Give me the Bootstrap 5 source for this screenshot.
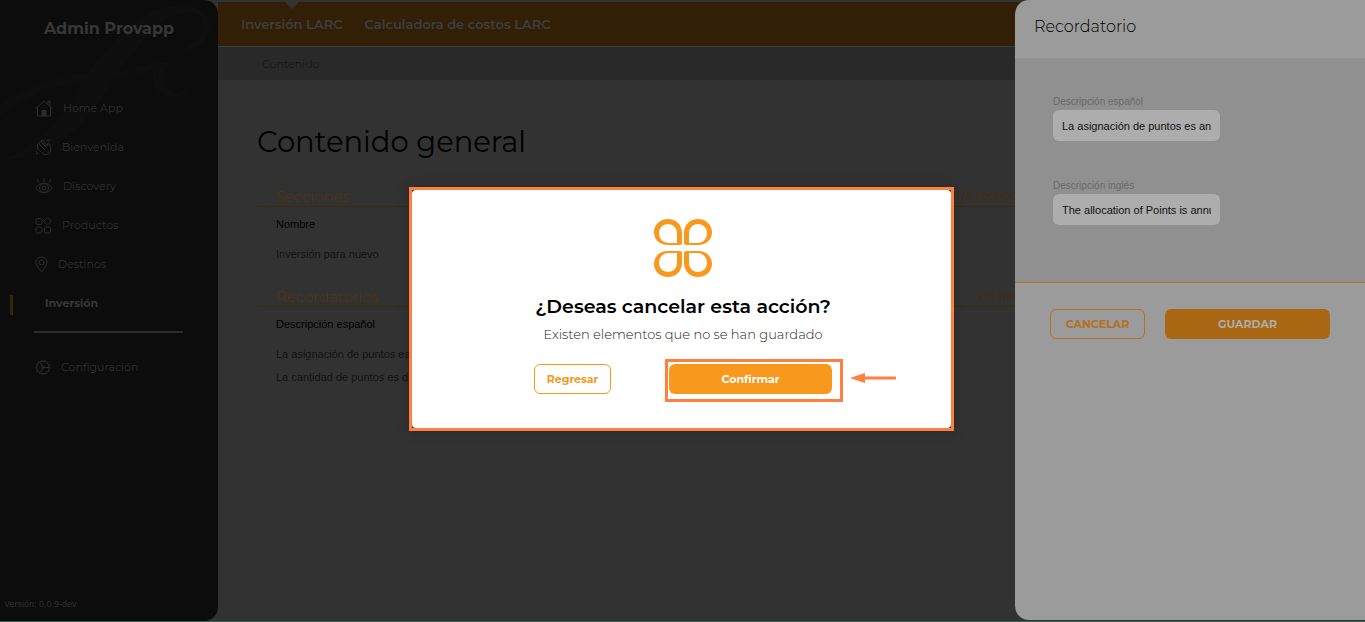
<!DOCTYPE html>
<html lang="es">
<head>
<meta charset="utf-8">
<meta name="viewport" content="width=device-width, initial-scale=1">
<title>Admin Provapp</title>
<link href="https://cdn.jsdelivr.net/npm/bootstrap@5.3.0/dist/css/bootstrap.min.css" rel="stylesheet">
<style>
  :root { --brand: Montserrat, Inter, sans-serif; --plain: "Liberation Sans", Arial, sans-serif; }
  body { font-family: var(--brand); font-size: 11px; line-height: 16px; background: #323232; color: #000; border-bottom: 1px solid #35605f; overflow: hidden; }
  a { text-decoration: none; color: inherit; }
  h1, h2, p { margin: 0; }

  /* Side menu */
  .side { width: 218px; background: #0c0c0c; border-radius: 0 14px 14px 0; color: #303030; overflow: hidden; }
  .side .swash { position: absolute; left: 0; top: 0; }
  .side-title { font-size: 16px; line-height: 24px; font-weight: 700; color: #373737; padding: 17px 0 47px; }
  .side-list a { height: 39px; padding-left: 35px; gap: 10px; }
  .side-list svg { fill: none; stroke: #2d2d2d; stroke-width: 1; flex: none; }
  .side-list a.current { padding-left: 45px; color: #373737; font-weight: 700; }
  .side-list a.current::before { content: ""; position: absolute; left: 10px; top: 12px; width: 3px; height: 20px; background: #3a2304; }
  .side-rule { margin: 9px 35px 14px 34px; border-top: 2px solid #2b2b2b; }
  .version { font: 9px/12px var(--plain); padding: 0 4px 11px; }

  /* Top tabs and breadcrumb */
  .tabs { margin-top: 2px; height: 45px; background: #321f07; border-bottom: 1px solid #3c3c3c; color: #3e3e3e; font-size: 13px; font-weight: 600; padding-left: 23px; gap: 22px; }
  .tabs a.current::before { content: ""; position: absolute; top: -14px; left: 50%; margin-left: -7px; border: 7px solid transparent; border-top-color: #323232; border-bottom: 0; }
  .crumbs { height: 33px; background: #292929; color: #161616; padding-left: 44px; }
  .page { padding: 42px 39px 0; }
  .page h1 { font-size: 29px; line-height: 40px; font-weight: 400; margin-bottom: 24px; }

  .group-head { color: #54360d; border-bottom: 1px solid #3f2b0a; padding: 0 296px 0 19px; height: 21px; }
  .group-head h2 { font-size: 15px; line-height: 22px; font-weight: 300; }
  .group-head span { font: 12px/20px "Open Sans", sans-serif; color: #452c0b; }
  .group-table { font: 11px/16px var(--plain); margin: 0 0 21px 19px; }
  .group-table th { font-weight: 400; color: #000; padding: 9px 0 10px; }
  .group-table td { color: #121212; padding: 4px 0 3px; }

  /* Drawer */
  .drawer { width: 350px; bottom: 1px; background: #9b9b9b; border-radius: 14px 0 0 14px; }
  .drawer-title { font-size: 16px; line-height: 20px; font-weight: 300; color: #000; padding: 17px 19px 21px; }
  .drawer-fields { background: #909090; border-bottom: 1px solid #a8741c; padding: 37px 38px 57px; font-family: var(--plain); }
  .drawer-fields label { font-size: 10px; line-height: 14px; margin-bottom: 1px; color: #6a6a6a; }
  .drawer-fields .form-control { width: 167px; height: 31px; padding: 0 9px; border: 0; border-radius: 6px; background: #adadad; color: #111; font-size: 11px; }
  .field + .field { margin-top: 38px; }
  .actions { padding: 26px 35px; gap: 20px; }
  .act { height: 30px; border-radius: 6px; padding: 0; font-size: 11px; line-height: 16px; font-weight: 700; }
  .act-dim { width: 95px; border: 1px solid #b3701d; color: #b3701d; }
  .act-dim-full { background: #a96613; color: #adadad; }

  /* Confirmation dialog */
  .veil { inset: 0 2px 3px 0; pointer-events: none; }
  .dialog { width: 545px; background: #333; border: 3px solid #ff7f3f; box-shadow: 0 0 12px rgba(0,0,0,.2); pointer-events: auto; }
  .dialog-body { background: #fff; border-radius: 4px; padding: 28px 119px 34px 122px; }
  .dialog h2 { font-size: 19px; line-height: 24px; font-weight: 600; margin-top: 17px; white-space: nowrap; }
  .dialog p { font-size: 13px; line-height: 20px; font-weight: 300; color: #222; margin: 5px 0 20px; white-space: nowrap; }
  .act-line { width: 77px; border: 1px solid #f8981d; color: #f8981d; }
  .act-full { width: 163px; background: #f8981d; color: #fff; }
  .mark-frame { inset: -5px -11px -8px -4px; border: 3px solid #ff7f3f; pointer-events: none; }
  .mark-arrow { left: 100%; top: 8px; margin-left: 18px; }
</style>
</head>
<body class="vh-100 d-flex position-relative">

<nav class="side position-relative d-flex flex-column flex-shrink-0" aria-label="Menú principal">
  <svg class="swash" width="218" height="170" fill="#0e0e0e" aria-hidden="true">
    <path d="M0 104C22 88 53 78 88 72C112 42 138 10 172 6C198 4 211 13 210 26C208 43 194 53 177 52C193 46 205 34 203 22C200 8 178 10 162 22C145 35 133 56 118 72C138 66 153 61 174 62C162 70 161 83 170 90C177 96 185 92 188 84C190 94 181 100 170 97C155 93 150 80 154 70C138 75 126 76 116 79C91 113 66 158 0 160C30 150 60 125 82 82C55 87 25 96 0 116Z"/>
  </svg>
  <div class="side-title text-center position-relative">Admin Provapp</div>
  <div class="side-list d-flex flex-column position-relative">
    <a href="#" class="d-flex align-items-center">
      <svg width="18" height="18" viewBox="0 0 18 18"><path d="M.7 9.500L9 2L17.300 9.500M2.500 8.500V17H15.500V8.500M13 5.500V2H15V7.500"/><path d="M7 17V11.500H11V17Z" fill="#2d2d2d"/></svg>Home App</a>
    <a href="#" class="d-flex align-items-center">
      <svg width="17" height="18" viewBox="0 0 17 18"><path d="M3 12L2.500 6L4 5.500L6 8M4 5L6 3L11 9M6 3L8 2L12 8L12.500 5.500L14.500 6L16 11C16 14 14 16.500 11 16.500C8 16.500 7 15 3 11M5 7L10 12M7 5L12 10M1 13L3 16M12 2L15 4M14 1L15 2M1 16H2"/></svg>Bienvenida</a>
    <a href="#" class="d-flex align-items-center">
      <svg width="18" height="18" viewBox="0 0 18 18"><path d="M.7 11C5 4.500 13 4.500 17.300 11C13 17.500 5 17.500 .7 11ZM9 1V4.500M2 2.500L4 5.500M16 2.500L14 5.500"/><circle cx="9" cy="11" r="4.500"/><circle cx="9" cy="11" r="2"/></svg>Discovery</a>
    <a href="#" class="d-flex align-items-center">
      <svg width="17" height="18" viewBox="0 0 17 18"><rect x="1" y="2.500" width="6" height="6" rx="1.500"/><rect x="1" y="11" width="6" height="6" rx="1.500"/><rect x="9.500" y="11" width="6" height="6" rx="1.500"/><path d="M12.500 1.500L16.300 5.300L12.500 9L8.700 5.300Z"/></svg>Productos</a>
    <a href="#" class="d-flex align-items-center">
      <svg width="13" height="18" viewBox="0 0 13 18"><path d="M6.500 17C4 13.500 .8 10.500 .8 7.500C.8 4 3.300 2 6.500 2S12.200 4 12.200 7.500C12.200 10.500 9 13.500 6.500 17Z"/><circle cx="6.500" cy="7.500" r="2.500"/></svg>Destinos</a>
    <a href="#" class="current d-flex align-items-center position-relative" aria-current="page">Inversión</a>
    <div class="side-rule"></div>
    <a href="#" class="d-flex align-items-center">
      <svg width="16" height="18" viewBox="0 0 16 18"><circle cx="8" cy="9.500" r="6.300"/><circle cx="8" cy="9.500" r="7.200" stroke-dasharray="1.500 2"/><path d="M8 9.500H14M8 9.500L5 4.500M8 9.500L5 14.500"/><circle cx="8" cy="9.500" r="1.200"/></svg>Configuración</a>
  </div>
  <div class="version mt-auto">Versión: 0.0.9-dev</div>
</nav>

<main class="flex-grow-1">
  <nav class="tabs d-flex align-items-center" aria-label="Secciones">
    <a href="#" class="current position-relative" aria-current="page">Inversión LARC</a>
    <a href="#">Calculadora de costos LARC</a>
  </nav>
  <div class="crumbs d-flex align-items-center">Contenido</div>
  <div class="page">
    <h1>Contenido general</h1>
    <section>
      <div class="group-head d-flex justify-content-between"><h2>Secciones</h2><span>1/5 secciones</span></div>
      <table class="group-table">
        <thead><tr><th scope="col">Nombre</th></tr></thead>
        <tbody><tr><td>Inversión para nuevo</td></tr></tbody>
      </table>
    </section>
    <section>
      <div class="group-head d-flex justify-content-between"><h2>Recordatorios</h2><span>2/5 items</span></div>
      <table class="group-table">
        <thead><tr><th scope="col">Descripción español</th></tr></thead>
        <tbody>
          <tr><td>La asignación de puntos es</td></tr>
          <tr><td>La cantidad de puntos es d</td></tr>
        </tbody>
      </table>
    </section>
  </div>
</main>

<aside class="drawer position-absolute top-0 end-0">
  <h2 class="drawer-title">Recordatorio</h2>
  <div class="drawer-fields">
    <div class="field">
      <label class="d-block" for="descEs">Descripción español</label>
      <input class="form-control" id="descEs" type="text" value="La asignación de puntos es anual">
    </div>
    <div class="field">
      <label class="d-block" for="descEn">Descripción inglés</label>
      <input class="form-control" id="descEn" type="text" value="The allocation of Points is annual">
    </div>
  </div>
  <div class="actions d-flex">
    <button type="button" class="btn act act-dim">CANCELAR</button>
    <button type="button" class="btn act act-dim-full flex-grow-1">GUARDAR</button>
  </div>
</aside>

<div class="veil position-absolute d-flex align-items-center justify-content-center">
  <div class="dialog" role="dialog" aria-labelledby="askTitle">
    <div class="dialog-body d-flex flex-column align-items-center">
      <svg width="60" height="60" viewBox="0 0 60 60" aria-hidden="true">
        <defs><path id="petal" fill="#f8981d" fill-rule="evenodd" d="M15 1C23 1 29 7 29 15V25Q29 27 27 27H15C7 27 1 22 1 14C1 7 7 1 15 1ZM15 6C10 6 6 10 6 15C6 21 10 25 16 25H24V15C24 10 20 6 15 6Z"/></defs>
        <use href="#petal"/>
        <use href="#petal" transform="matrix(-1 0 0 1 60 0)"/>
        <use href="#petal" transform="matrix(1 0 0 -1 0 60)"/>
        <use href="#petal" transform="matrix(-1 0 0 -1 60 60)"/>
      </svg>
      <h2 id="askTitle">¿Deseas cancelar esta acción?</h2>
      <p>Existen elementos que no se han guardado</p>
      <div class="d-flex justify-content-between w-100">
        <button type="button" class="btn act act-line">Regresar</button>
        <div class="position-relative">
          <button type="button" class="btn act act-full d-block">Confirmar</button>
          <div class="mark-frame position-absolute"></div>
          <svg class="mark-arrow position-absolute" width="46" height="12" aria-hidden="true"><path d="M0 6L15 1V11Z" fill="#ff7f3f"/><path d="M14 6H45" stroke="#ff7f3f" stroke-width="3" stroke-linecap="round"/></svg>
        </div>
      </div>
    </div>
  </div>
</div>

<script src="https://cdn.jsdelivr.net/npm/bootstrap@5.3.0/dist/js/bootstrap.bundle.min.js"></script>
</body>
</html>
